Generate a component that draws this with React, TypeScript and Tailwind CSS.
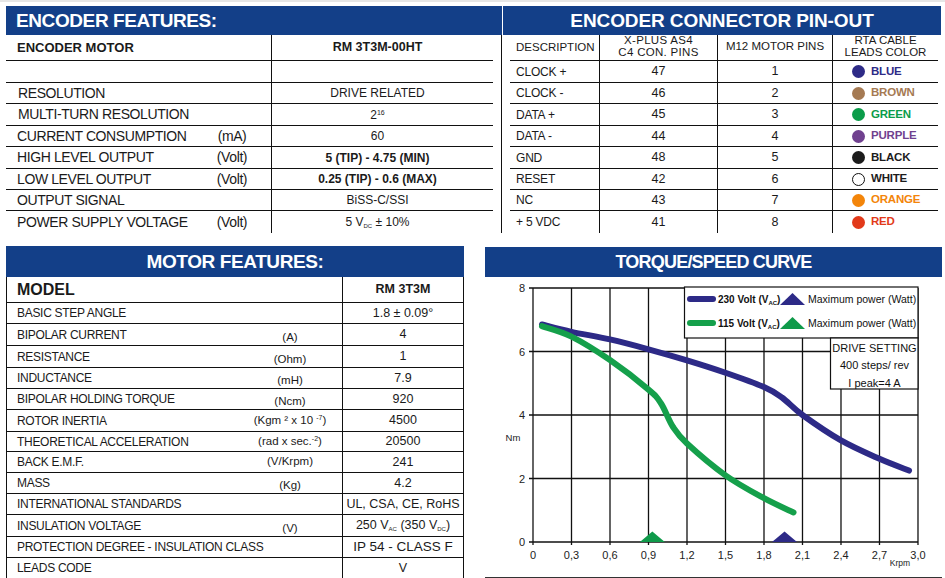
import React from "react";

type Pt = [number, number];

const X = (v: number) => 48 + v * 128.33;
const Y = (v: number) => 265 - v * 31.75;

// catmull-rom -> cubic bezier, good enough for the two curves
function smooth(data: Pt[]) {
  const pts = data.map(([x, y]) => [X(x), Y(y)]);
  let d = `M${pts[0][0]},${pts[0][1]}`;
  for (let i = 0; i < pts.length - 1; i++) {
    const p0 = pts[i - 1] || pts[i];
    const p1 = pts[i];
    const p2 = pts[i + 1];
    const p3 = pts[i + 2] || p2;
    const c1x = p1[0] + (p2[0] - p0[0]) / 6;
    const c1y = p1[1] + (p2[1] - p0[1]) / 6;
    const c2x = p2[0] - (p3[0] - p1[0]) / 6;
    const c2y = p2[1] - (p3[1] - p1[1]) / 6;
    d += ` C${c1x},${c1y} ${c2x},${c2y} ${p2[0]},${p2[1]}`;
  }
  return d;
}

const blueCurve: Pt[] = [
  [0.07, 6.85], [0.3, 6.62], [0.6, 6.38], [0.9, 6.07], [1.2, 5.72], [1.5, 5.33],
  [1.8, 4.88], [1.94, 4.55], [2.1, 4.0], [2.4, 3.2], [2.7, 2.62], [2.93, 2.25],
];
const greenCurve: Pt[] = [
  [0.07, 6.8], [0.3, 6.47], [0.6, 5.73], [0.9, 4.8], [0.997, 4.37], [1.09, 3.63],
  [1.2, 3.1], [1.5, 2.1], [1.8, 1.38], [2.03, 0.93],
];

type EncRow = { label: string; unit?: string; value: React.ReactNode; h: string; bold?: boolean; pl?: string };

const encoderRows: EncRow[] = [
  { label: "ENCODER MOTOR", value: "RM 3T3M-00HT", h: "h-[26px]", bold: true },
  { label: "", value: "", h: "h-[22px]" },
  { label: "RESOLUTION", value: "DRIVE RELATED", h: "h-[21px]", pl: "pl-[12px]" },
  {
    label: "MULTI-TURN RESOLUTION",
    value: (
      <span>
        2<sup className="text-[7px]">16</sup>
      </span>
    ),
    h: "h-[22px]",
    pl: "pl-[12px]",
  },
  { label: "CURRENT CONSUMPTION", unit: "(mA)", value: "60", h: "h-[21px]" },
  { label: "HIGH LEVEL OUTPUT", unit: "(Volt)", value: <b>5 (TIP) - 4.75 (MIN)</b>, h: "h-[22px]" },
  { label: "LOW LEVEL OUTPUT", unit: "(Volt)", value: <b>0.25 (TIP) - 0.6 (MAX)</b>, h: "h-[21px]" },
  { label: "OUTPUT SIGNAL", value: "BiSS-C/SSI", h: "h-[21px]" },
  {
    label: "POWER SUPPLY VOLTAGE",
    unit: "(Volt)",
    value: (
      <span>
        5 V<sub className="text-[6px]">DC</sub> ± 10%
      </span>
    ),
    h: "h-[22px]",
  },
];

const pins = [
  { d: "CLOCK +", a: "47", b: "1", c: "BLUE", col: "bg-[#2e2b87]", txt: "text-[#2e2b87]" },
  { d: "CLOCK -", a: "46", b: "2", c: "BROWN", col: "bg-[#a57a53]", txt: "text-[#a57a53]" },
  { d: "DATA +", a: "45", b: "3", c: "GREEN", col: "bg-[#0b9c4a]", txt: "text-[#0b9c4a]" },
  { d: "DATA -", a: "44", b: "4", c: "PURPLE", col: "bg-[#70418f]", txt: "text-[#70418f]" },
  { d: "GND", a: "48", b: "5", c: "BLACK", col: "bg-[#1c1c1c]", txt: "text-[#1c1c1c]" },
  { d: "RESET", a: "42", b: "6", c: "WHITE", col: "bg-white border border-[#111]", txt: "text-[#1c1c1c]" },
  { d: "NC", a: "43", b: "7", c: "ORANGE", col: "bg-[#f3850a]", txt: "text-[#f3850a]" },
  { d: "+ 5 VDC", a: "41", b: "8", c: "RED", col: "bg-[#e23a1a]", txt: "text-[#e23a1a]" },
];
const pinHeights = ["h-[22px]", "h-[21px]", "h-[22px]", "h-[21px]", "h-[22px]", "h-[21px]", "h-[21px]", "h-[22px]"];

type MotRow = { label: string; unit?: React.ReactNode; value: React.ReactNode; h: string; low?: boolean };

const motorRows: MotRow[] = [
  { label: "BASIC STEP ANGLE", value: "1.8 ± 0.09°", h: "h-[21px]" },
  { label: "BIPOLAR CURRENT", unit: "(A)", value: "4", h: "h-[22px]", low: true },
  { label: "RESISTANCE", unit: "(Ohm)", value: "1", h: "h-[22px]", low: true },
  { label: "INDUCTANCE", unit: "(mH)", value: "7.9", h: "h-[21px]", low: true },
  { label: "BIPOLAR HOLDING TORQUE", unit: "(Ncm)", value: "920", h: "h-[21px]", low: true },
  {
    label: "ROTOR INERTIA",
    unit: (
      <span>
        (Kgm ² x 10 <sup className="text-[7px]">-7</sup>)
      </span>
    ),
    value: "4500",
    h: "h-[22px]",
  },
  {
    label: "THEORETICAL ACCELERATION",
    unit: (
      <span>
        (rad x sec.<sup className="text-[7px]">-2</sup>)
      </span>
    ),
    value: "20500",
    h: "h-[20px]",
  },
  { label: "BACK E.M.F.", unit: "(V/Krpm)", value: "241", h: "h-[21px]" },
  { label: "MASS", unit: "(Kg)", value: "4.2", h: "h-[21px]", low: true },
  { label: "INTERNATIONAL STANDARDS", value: "UL, CSA, CE, RoHS", h: "h-[21px]" },
  {
    label: "INSULATION VOLTAGE",
    unit: "(V)",
    value: (
      <span>
        250 V<sub className="text-[6px]">AC</sub> (350 V<sub className="text-[6px]">DC</sub>)
      </span>
    ),
    h: "h-[22px]",
    low: true,
  },
  { label: "PROTECTION DEGREE - INSULATION CLASS", value: <span className="text-[13.5px]">IP 54 - CLASS F</span>, h: "h-[21px]" },
  { label: "LEADS CODE", value: "V", h: "h-[20px]" },
];

function EncoderFeatures() {
  return (
    <div className="w-[496px] shrink-0">
      <div className="h-[29px] bg-[#133f88] pl-[10px] text-[19px] font-bold leading-[30px] tracking-[-0.4px] text-white">
        ENCODER FEATURES:
      </div>
      <div className="border-r border-[#111]">
        <div className="w-[487px]">
          {encoderRows.map((r, i) => (
            <div key={i} className={`flex ${r.h} ${i < encoderRows.length - 1 ? "border-b border-[#111]" : ""}`}>
              <div className={`flex w-[266px] items-center border-r border-[#111] ${r.pl ?? "pl-[11px]"}`}>
                <span
                  className={`w-[194px] whitespace-nowrap ${r.bold ? "text-[13px] font-bold" : "text-[14px] tracking-[-0.4px]"} text-[#1a1a1a]`}
                >
                  {r.label}
                </span>
                {r.unit && <span className="w-[42px] text-center text-[14px] tracking-[-0.4px] text-[#1a1a1a]">{r.unit}</span>}
              </div>
              <div className={`flex flex-1 items-center justify-center pr-[10px] text-[#1a1a1a] ${r.bold ? "text-[12.5px] font-bold" : "text-[12px]"}`}>
                {r.value}
              </div>
            </div>
          ))}
        </div>
      </div>
    </div>
  );
}

function PinOut() {
  return (
    <div className="w-[438px] shrink-0">
      <div className="h-[29px] bg-[#133f88] text-center text-[19px] font-bold leading-[30px] tracking-[-0.1px] text-white">
        ENCODER CONNECTOR PIN-OUT
      </div>
      <div className="pl-[7px]">
        <div className="w-[428px] text-[#1a1a1a]">
          <div className="grid h-[26px] grid-cols-[90px_118px_115px_105px] border-b border-[#111] text-[11.5px] leading-[11.5px]">
            <div className="flex items-center border-r border-[#111] pl-[6px]">DESCRIPTION</div>
            <div className="flex flex-col items-center justify-center border-r border-[#111] pb-[2px] tracking-[0.3px]">
              <span>X-PLUS AS4</span>
              <span>C4 CON. PINS</span>
            </div>
            <div className="flex items-center justify-center border-r border-[#111] pb-[2px]">M12 MOTOR PINS</div>
            <div className="flex flex-col items-center justify-center pb-[2px]">
              <span>RTA CABLE</span>
              <span>LEADS COLOR</span>
            </div>
          </div>
          {pins.map((p, i) => (
            <div
              key={p.d}
              className={`grid grid-cols-[90px_118px_115px_105px] ${pinHeights[i]} ${i < pins.length - 1 ? "border-b border-[#111]" : ""}`}
            >
              <div className="flex items-center border-r border-[#111] pl-[6px] text-[12px] tracking-[-0.2px]">{p.d}</div>
              <div className="flex items-center justify-center border-r border-[#111] text-[12.5px]">{p.a}</div>
              <div className="flex items-center justify-center border-r border-[#111] text-[12.5px]">{p.b}</div>
              <div className="flex items-center gap-[6px] pl-[19px]">
                <span className={`h-[13px] w-[13px] rounded-full ${p.col}`} />
                <span className={`text-[11.5px] font-bold tracking-[-0.2px] ${p.txt}`}>{p.c}</span>
              </div>
            </div>
          ))}
        </div>
      </div>
    </div>
  );
}

function MotorFeatures() {
  return (
    <div className="ml-[6px] w-[458px] shrink-0">
      <div className="h-[31px] bg-[#133f88] text-center text-[19px] font-bold leading-[32px] tracking-[-0.4px] text-white">
        MOTOR FEATURES:
      </div>
      <div className="border-x border-b border-[#111] text-[#1a1a1a]">
        <div className="flex h-[26px] border-b border-[#111]">
          <div className="flex w-[336px] items-center border-r border-[#111] pl-[10px] text-[16px] font-bold">MODEL</div>
          <div className="flex flex-1 items-center justify-center text-[12.5px] font-bold">RM 3T3M</div>
        </div>
        {motorRows.map((r, i) => (
          <div key={r.label} className={`flex ${r.h} ${i < motorRows.length - 1 ? "border-b border-[#111]" : ""}`}>
            <div className="flex w-[336px] items-center border-r border-[#111] pl-[10px]">
              <span className="flex-1 whitespace-nowrap text-[12px] tracking-[-0.3px]">{r.label}</span>
              {r.unit && (
                <span className={`mr-[2px] w-[100px] text-center text-[11.5px] ${r.low ? "pt-[6px]" : ""}`}>{r.unit}</span>
              )}
            </div>
            <div className="flex flex-1 items-center justify-center text-[12.5px]">{r.value}</div>
          </div>
        ))}
      </div>
    </div>
  );
}

function Chart() {
  const xs = Array.from({ length: 11 }, (_, i) => i);
  const ys = [0, 1, 2, 3, 4];
  const xlabels = ["0", "0,3", "0,6", "0,9", "1,2", "1,5", "1,8", "2,1", "2,4", "2,7", "3,0"];
  const font = "Liberation Sans, Arial, sans-serif";
  return (
    <svg width={457} height={300} viewBox="0 0 457 300" fontFamily={font} className="block">
      {xs.map((i) => (
        <line key={"v" + i} x1={X(i * 0.3)} x2={X(i * 0.3)} y1={Y(8)} y2={268} stroke="#111" strokeWidth={1.3} />
      ))}
      {ys.map((j) => (
        <line key={"h" + j} x1={44} x2={X(3)} y1={Y(j * 2)} y2={Y(j * 2)} stroke="#111" strokeWidth={1.3} />
      ))}
      {ys.map((j) => (
        <text key={"yl" + j} x={37} y={Y(j * 2) + 4} fontSize={11} textAnchor="middle" fill="#222">
          {j * 2}
        </text>
      ))}
      {xlabels.map((l, i) => (
        <text key={l} x={X(i * 0.3)} y={282} fontSize={11} textAnchor="middle" fill="#222">
          {l}
        </text>
      ))}
      <text x={28} y={164} fontSize={9.5} textAnchor="middle" fill="#222">
        Nm
      </text>
      <text x={415} y={289} fontSize={8.5} textAnchor="middle" fill="#222">
        Krpm
      </text>

      <path d={smooth(blueCurve)} fill="none" stroke="#2d2a87" strokeWidth={6} strokeLinecap="round" strokeLinejoin="round" />
      <path d={smooth(greenCurve)} fill="none" stroke="#15a04b" strokeWidth={6} strokeLinecap="round" strokeLinejoin="round" />

      <polygon points={`${X(0.93) - 12.5},265 ${X(0.93)},254.5 ${X(0.93) + 12.5},265`} fill="#0f9a4a" />
      <polygon points={`${X(1.96) - 12.5},265 ${X(1.96)},254.5 ${X(1.96) + 12.5},265`} fill="#2d2a87" />

      {/* legend */}
      <rect x={199.5} y={10} width={233.5} height={51} fill="#fff" stroke="#111" strokeWidth={1.2} />
      <line x1={205} x2={228} y1={22} y2={22} stroke="#2d2a87" strokeWidth={6} strokeLinecap="round" />
      <text x={233} y={26} fontSize={10} fontWeight={700} fill="#111">
        230 Volt (V<tspan fontSize={6} dy={2}>AC</tspan>
        <tspan dy={-2}>)</tspan>
      </text>
      <polygon points="295,28 307.5,16 320,28" fill="#2d2a87" />
      <text x={323} y={26} fontSize={10.5} fill="#111">
        Maximum power (Watt)
      </text>
      <line x1={205} x2={228} y1={46} y2={46} stroke="#15a04b" strokeWidth={6} strokeLinecap="round" />
      <text x={233} y={50} fontSize={10} fontWeight={700} fill="#111">
        115 Volt (V<tspan fontSize={6} dy={2}>AC</tspan>
        <tspan dy={-2}>)</tspan>
      </text>
      <polygon points="295,52 307.5,40 320,52" fill="#0f9a4a" />
      <text x={323} y={50} fontSize={10.5} fill="#111">
        Maximum power (Watt)
      </text>

      <rect x={345.5} y={61} width={87.5} height={51} fill="#fff" stroke="#111" strokeWidth={1.2} />
      <text x={389.5} y={75} fontSize={11} textAnchor="middle" fill="#111">
        DRIVE SETTING
      </text>
      <text x={389.5} y={92} fontSize={11} textAnchor="middle" fill="#111">
        400 steps/ rev
      </text>
      <text x={389.5} y={110} fontSize={11} textAnchor="middle" fill="#111">
        I peak=4 A
      </text>
    </svg>
  );
}

function TorqueCurve() {
  return (
    <div className="ml-[21px] w-[457px] shrink-0 pt-[1px]">
      <div className="h-[30px] bg-[#133f88] text-center text-[18px] font-bold leading-[31px] tracking-[-0.8px] text-white">
        TORQUE/SPEED CURVE
      </div>
      <div className="h-[301px] border-b border-[#333]">
        <Chart />
      </div>
    </div>
  );
}

export default function App() {
  return (
    <div className="h-[578px] w-[945px] overflow-hidden bg-white font-['Liberation_Sans',Arial,sans-serif]">
      <div className="h-[2px] bg-[#e6e6e6]" />
      <div className="flex pl-[6px] pt-[4px]">
        <EncoderFeatures />
        <div className="w-[1px]" />
        <PinOut />
      </div>
      <div className="mt-[13px] flex">
        <MotorFeatures />
        <TorqueCurve />
      </div>
    </div>
  );
}
